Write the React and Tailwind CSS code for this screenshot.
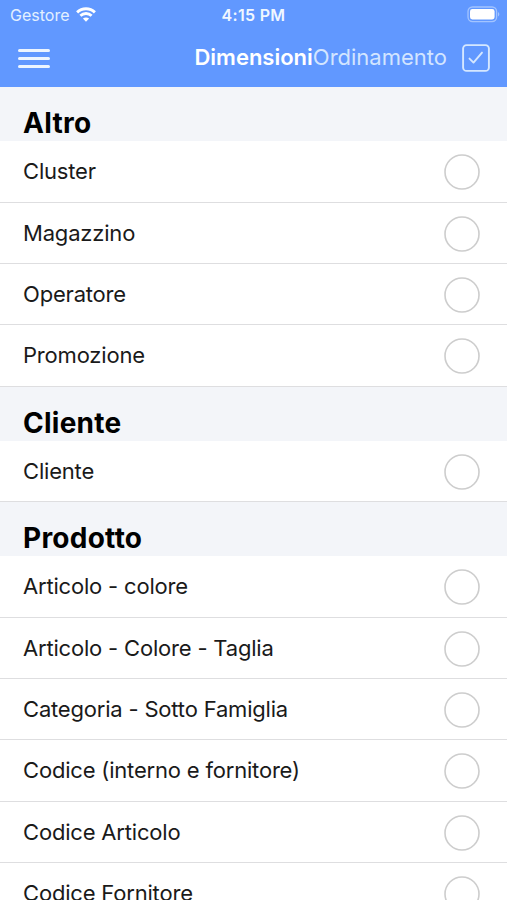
import React, { useState } from 'react';

const SECTIONS = [
  { title: 'Altro', items: ['Cluster', 'Magazzino', 'Operatore', 'Promozione'] },
  { title: 'Cliente', items: ['Cliente'] },
  {
    title: 'Prodotto',
    items: [
      'Articolo - colore',
      'Articolo - Colore - Taglia',
      'Categoria - Sotto Famiglia',
      'Codice (interno e fornitore)',
      'Codice Articolo',
      'Codice Fornitore',
    ],
  },
];

function WifiIcon() {
  return (
    <svg width="20" height="15" viewBox="0 0 20 15" fill="none" stroke="#fff" strokeWidth="2.9">
      <path d="M1.1 5.4C6.1 .5 13.9 .5 18.9 5.4" />
      <path d="M4.4 8.8C7.6 5.8 12.4 5.8 15.6 8.8" />
      <path d="M10 14.8 6.9 11.6C8.7 10 11.3 10 13.1 11.6Z" fill="#fff" stroke="none" />
    </svg>
  );
}

function BatteryIcon() {
  return (
    <svg width="33" height="17" viewBox="0 0 33 17" fill="none">
      <rect x="1" y="1" width="28.6" height="14.6" rx="4.5" stroke="#a3c4ff" strokeWidth="1.3" />
      <rect x="3" y="3.1" width="24.6" height="10.4" rx="2.4" fill="#fff" />
      <path d="M31 6v4.5c1.8-.7 1.8-3.8 0-4.5Z" fill="#a3c4ff" />
    </svg>
  );
}

function StatusBar() {
  return (
    <div className="grid h-[29px] grid-cols-3 items-center pl-[7px] pr-[7px] text-[16px] text-[#e3f0ff]">
      <div className="flex items-center gap-[7px] pl-[3px]">
        <span>Gestore</span>
        <WifiIcon />
      </div>
      <span className="text-center font-semibold tracking-[0.3px] text-[#f0f7ff]">4:15 PM</span>
      <div className="flex justify-end">
        <BatteryIcon />
      </div>
    </div>
  );
}

function NavBar() {
  return (
    <div className="flex h-[58px] items-center pl-[18px] pr-[17px]">
      <button className="flex flex-col gap-[5px]">
        <span className="h-[3px] w-[32px] rounded-full bg-[#edf5ff]" />
        <span className="h-[3px] w-[32px] rounded-full bg-[#edf5ff]" />
        <span className="h-[3px] w-[32px] rounded-full bg-[#edf5ff]" />
      </button>
      <div className="ml-auto flex pb-[2px] text-[22px] leading-[28px]">
        <span className="font-semibold text-white">Dimensioni</span>
        <span className="text-[#d3e5ff]">Ordinamento</span>
      </div>
      <svg className="ml-[15px]" width="28" height="28" viewBox="0 0 28 28" fill="none" stroke="#d5e7ff" strokeLinecap="round" strokeLinejoin="round" strokeWidth="1.9">
        <rect x="1.1" y="1.1" width="25.8" height="25.8" rx="3.5" />
        <path d="M7.5 14.6 11.5 18.6 20 8.6" />
      </svg>
    </div>
  );
}

function Row({ label, checked, onToggle }) {
  return (
    <div
      onClick={onToggle}
      className="flex h-[61.33px] items-center justify-between border-b border-[#dedee0] bg-white pl-[23px] pr-[27px]"
    >
      <span className="text-[22px] leading-[28px] tracking-[-0.19px] text-[#1a1a1a]">{label}</span>
      <svg className="mt-[2px]" width="36" height="36" viewBox="0 0 36 36">
        <circle cx="18" cy="18" r="17" fill={checked ? '#6198ff' : 'none'} stroke="#cdcdcd" strokeWidth="1.6" />
      </svg>
    </div>
  );
}

export default function App() {
  const [selected, setSelected] = useState([]);

  const toggle = (key) => {
    setSelected((prev) => (prev.includes(key) ? prev.filter((k) => k !== key) : [...prev, key]));
  };

  return (
    <div className="h-screen overflow-hidden bg-white font-['Inter',sans-serif]">
      <header className="h-[87px] bg-[#6198ff]">
        <StatusBar />
        <NavBar />
      </header>

      {SECTIONS.map((section) => (
        <section key={section.title}>
          <h2 className="flex h-[54.2px] items-end bg-[#f3f5f9] pl-[23px] text-[28px] font-bold leading-[36px] tracking-[0.25px] text-black">
            {section.title}
          </h2>
          {section.items.map((item) => (
            <Row
              key={item}
              label={item}
              checked={selected.includes(`${section.title}/${item}`)}
              onToggle={() => toggle(`${section.title}/${item}`)}
            />
          ))}
        </section>
      ))}
    </div>
  );
}
